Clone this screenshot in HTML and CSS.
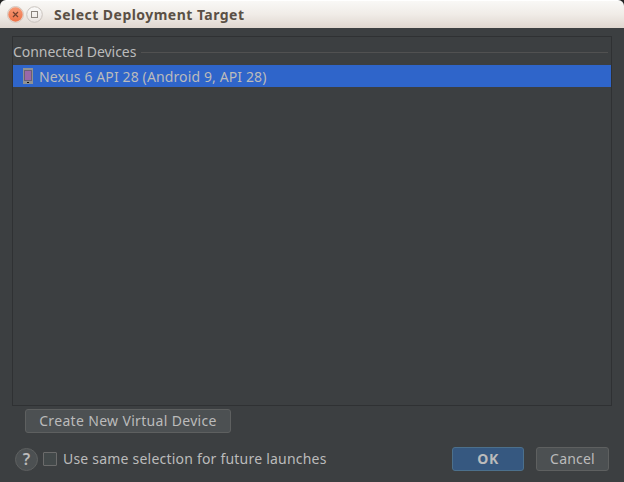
FILE: index.html
```html
<!DOCTYPE html>
<html lang="en">
<head>
<meta charset="utf-8">
<title>Select Deployment Target</title>
<link rel="stylesheet" href="styles.css">
</head>
<body>
<div class="window">
  <header class="titlebar">
    <svg class="controls" width="38" height="18" viewBox="0 0 38 18">
      <defs>
        <linearGradient id="close" x1="0" y1="0" x2="0" y2="1"><stop offset="0" stop-color="#f79a76"/><stop offset="1" stop-color="#ee7247"/></linearGradient>
        <linearGradient id="max" x1="0" y1="0" x2="0" y2="1"><stop offset="0" stop-color="#fcfbfa"/><stop offset="1" stop-color="#e8e3df"/></linearGradient>
      </defs>
      <circle cx="8.5" cy="8.5" r="8" fill="#e9dcd4" stroke="#d6c8bf"/>
      <circle cx="8.5" cy="8.5" r="7.2" fill="url(#close)"/>
      <path d="M6 6l5 5M11 6l-5 5" stroke="#72402e" stroke-width="1.2"/>
      <circle cx="27.5" cy="8.5" r="7.8" fill="url(#max)" stroke="#c9c3be"/>
      <rect x="24.5" y="5.500" width="6" height="6" fill="none" stroke="#8a847e"/>
    </svg>
    <h1 class="title">Select Deployment Target</h1>
  </header>
  <main class="content">
    <section class="devices">
      <div class="heading"><span class="heading-text">Connected Devices</span><span class="rule"></span></div>
      <div class="device">
        <svg width="10" height="16" viewBox="0 0 10 16" shape-rendering="crispEdges">
          <rect width="10" height="16" fill="#929292"/>
          <rect x="1" y="2" width="8" height="11" fill="#6c6173"/>
          <rect x="2" y="3" width="6" height="9" fill="#9a68a9"/>
          <rect x="4" y="14" width="2" height="1" fill="#111"/>
        </svg>
        <span class="device-name">Nexus 6 API 28 (Android 9, API 28)</span>
      </div>
    </section>
    <button class="button create"><span>Create New Virtual Device</span></button>
    <footer class="footer">
      <button class="help">?</button>
      <span class="checkbox"></span>
      <span class="remember">Use same selection for future launches</span>
      <button class="button ok"><span>OK</span></button>
      <button class="button cancel"><span>Cancel</span></button>
    </footer>
  </main>
</div>
</body>
</html>
```
FILE: styles.css
```css
* { box-sizing: border-box; }
body { margin: 0; background: #222; font: 14px/22px "Noto Sans", sans-serif; color: #bbb; white-space: nowrap; }
.window { height: 482px; display: flex; flex-direction: column; background: #3c3f41; border-radius: 6px 6px 0 0; overflow: hidden; }
.titlebar { height: 28px; flex: none; display: flex; align-items: center; padding: 1px 7px 0; background: linear-gradient(#f9f8f6, #f0ece7 50%, #dfd6cf); border-top: 1px solid #fff; }
.controls { flex: none; }
.title { margin: 0 0 0 9px; font-size: 14px; line-height: 22px; font-weight: 700; letter-spacing: 0.47px; color: #5a5045; }
.content { flex: 1; display: flex; flex-direction: column; padding: 8px 12px 11px; }
.devices { height: 370px; border: 1px solid #2f3133; padding-top: 4px; }
.heading { height: 24px; display: flex; align-items: center; }
.heading-text { padding-bottom: 2px; letter-spacing: -0.06px; }
.rule { height: 1px; flex: 1; margin: 0 3px 2px 5px; background: #515151; }
.device { height: 22px; display: flex; align-items: center; padding-left: 10px; background: #2f65ca; }
.device-name { margin-left: 6px; padding-top: 2px; letter-spacing: 0.12px; }
.button { height: 24px; padding: 0; display: flex; align-items: center; justify-content: center; font: inherit; color: #bbb; background: #4c5052; border: 1px solid #5e6060; border-radius: 3px; }
.create { width: 206px; margin: 3px 0 0 13px; flex: none; letter-spacing: 0.33px; }
.footer { margin: 14px 3px 0; height: 24px; display: flex; align-items: center; }
.help { width: 23px; height: 23px; padding: 0; border: 1px solid #5e6060; border-radius: 50%; background: #4c5052; color: #bbb; font: 600 16px/20px "Noto Sans", sans-serif; }
.checkbox { width: 14px; height: 14px; margin-left: 5px; border: 1px solid #6b6b6b; border-radius: 1px; background: #43494a; }
.remember { margin-left: 6px; letter-spacing: 0.21px; }
.ok { width: 72px; margin-left: auto; background: #365880; border-color: #4c708c; font-weight: 700; letter-spacing: 0.5px; }
.cancel { width: 73px; margin-left: 12px; letter-spacing: 0.2px; }
```
